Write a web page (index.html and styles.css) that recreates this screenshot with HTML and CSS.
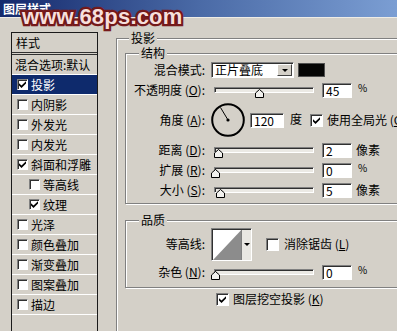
FILE: index.html
```html
<!DOCTYPE html>
<html lang="zh">
<head>
  <meta charset="UTF-8" />
  <title>图层样式</title>
  <link rel="stylesheet" href="styles.css">
</head>
<body>
  <div class="titlebar"><span class="title">图层样式</span></div>
  <div class="watermark">www.68ps.com</div>

  <div class="dialog">
    <div class="stylelist">
      <div class="list-head">样式</div>
      <div class="item plain">混合选项:默认</div>
      <div class="item selected"><span class="cb"><svg viewBox="0 0 7 7"><path d="M0 2.2 L2.5 4.6 L7 0.2 V2.6 L2.5 7 L0 4.6 Z"/></svg></span>投影</div>
      <div class="item"><span class="cb"></span>内阴影</div>
      <div class="item"><span class="cb"></span>外发光</div>
      <div class="item"><span class="cb"></span>内发光</div>
      <div class="item"><span class="cb"><svg viewBox="0 0 7 7"><path d="M0 2.2 L2.5 4.6 L7 0.2 V2.6 L2.5 7 L0 4.6 Z"/></svg></span>斜面和浮雕</div>
      <div class="item sub"><span class="cb"></span>等高线</div>
      <div class="item sub"><span class="cb"><svg viewBox="0 0 7 7"><path d="M0 2.2 L2.5 4.6 L7 0.2 V2.6 L2.5 7 L0 4.6 Z"/></svg></span>纹理</div>
      <div class="item"><span class="cb"></span>光泽</div>
      <div class="item"><span class="cb"></span>颜色叠加</div>
      <div class="item"><span class="cb"></span>渐变叠加</div>
      <div class="item"><span class="cb"></span>图案叠加</div>
      <div class="item"><span class="cb"></span>描边</div>
    </div>

    <fieldset class="group outer">
      <legend>投影</legend>

      <fieldset class="group inner">
        <legend>结构</legend>
        <div class="row">
          <span class="lbl">混合模式:</span>
          <div class="select">正片叠底<span class="drop"><i class="arrow"></i></span></div>
          <span class="swatch"></span>
        </div>
        <div class="row">
          <span class="lbl">不透明度 (<u>O</u>):</span>
          <div class="slider"><span class="thumb" style="left:45%"><svg viewBox="0 0 9 9"><polygon points="0.5,8.5 0.5,4 4.5,0.5 8.5,4 8.5,8.5"/></svg></span></div>
          <span class="num">45</span>
          <span class="unit pct">%</span>
        </div>
        <div class="row tall">
          <span class="lbl">角度 (<u>A</u>):</span>
          <svg class="dial" viewBox="0 0 34 34">
            <circle cx="17" cy="17" r="15.8"/>
            <line x1="17" y1="17" x2="9.5" y2="4.5"/>
            <circle class="dot" cx="17" cy="17" r="1.6"/>
          </svg>
          <span class="num wide">120</span>
          <span class="unit deg">度</span>
          <span class="cb big glob"><svg viewBox="0 0 7 7"><path d="M0 2.2 L2.5 4.6 L7 0.2 V2.6 L2.5 7 L0 4.6 Z"/></svg></span>
          <span class="cb-text">使用全局光 (<u>G</u>)</span>
        </div>
        <div class="row">
          <span class="lbl">距离 (<u>D</u>):</span>
          <div class="slider"><span class="thumb" style="left:3%"><svg viewBox="0 0 9 9"><polygon points="0.5,8.5 0.5,4 4.5,0.5 8.5,4 8.5,8.5"/></svg></span></div>
          <span class="num">2</span>
          <span class="unit">像素</span>
        </div>
        <div class="row">
          <span class="lbl">扩展 (<u>R</u>):</span>
          <div class="slider"><span class="thumb" style="left:0%"><svg viewBox="0 0 9 9"><polygon points="0.5,8.5 0.5,4 4.5,0.5 8.5,4 8.5,8.5"/></svg></span></div>
          <span class="num">0</span>
          <span class="unit pct">%</span>
        </div>
        <div class="row">
          <span class="lbl">大小 (<u>S</u>):</span>
          <div class="slider"><span class="thumb" style="left:5%"><svg viewBox="0 0 9 9"><polygon points="0.5,8.5 0.5,4 4.5,0.5 8.5,4 8.5,8.5"/></svg></span></div>
          <span class="num">5</span>
          <span class="unit">像素</span>
        </div>
      </fieldset>

      <fieldset class="group inner quality">
        <legend>品质</legend>
        <div class="row contour-row">
          <span class="lbl">等高线:</span>
          <div class="contour">
            <svg class="curve" viewBox="0 0 28 28" preserveAspectRatio="none">
              <rect width="28" height="28" fill="#fff"/>
              <polygon points="0,28 28,0 28,28" fill="#8c8c8c"/>
            </svg>
            <span class="cdrop"><i class="arrow"></i></span>
          </div>
          <span class="cb big aa"></span>
          <span class="cb-text">消除锯齿 (<u>L</u>)</span>
        </div>
        <div class="row noise">
          <span class="lbl">杂色 (<u>N</u>):</span>
          <div class="slider"><span class="thumb" style="left:0%"><svg viewBox="0 0 9 9"><polygon points="0.5,8.5 0.5,4 4.5,0.5 8.5,4 8.5,8.5"/></svg></span></div>
          <span class="num">0</span>
          <span class="unit pct">%</span>
        </div>
      </fieldset>

      <div class="row knockout">
        <span class="cb big"><svg viewBox="0 0 7 7"><path d="M0 2.2 L2.5 4.6 L7 0.2 V2.6 L2.5 7 L0 4.6 Z"/></svg></span>
        <span class="cb-text">图层挖空投影 (<u>K</u>)</span>
      </div>
    </fieldset>
  </div>
</body>
</html>
```

FILE: styles.css
```css
* {
  margin: 0;
  padding: 0;
  box-sizing: border-box;
}
body {
  position: relative;
  width: 397px;
  height: 331px;
  overflow: hidden;
  background: #d4d0c8;
  color: #000;
  font-family: "Noto Sans CJK SC", "Liberation Sans", sans-serif;
  font-size: 12px;
  line-height: 14px;
}
u {
  text-decoration: underline;
  text-underline-offset: 1px;
}

/* title bar */
.titlebar {
  height: 18px;
  padding: 1px 0 0 3px;
  background: linear-gradient(to right, #14296c, #4a6aa6 50%, #7b9ed3);
  border-bottom: 1px solid #eeece6;
}
.title {
  color: #fff;
  font-weight: bold;
  line-height: 15px;
}
.watermark {
  position: absolute;
  left: 22px;
  top: 4px;
  font-family: "Liberation Sans", sans-serif;
  font-weight: bold;
  font-size: 22px;
  line-height: 25px;
  letter-spacing: 0.2px;
  color: #f7dfdc;
  -webkit-text-stroke: 4.5px #7a1c1e;
  paint-order: stroke fill;
  text-shadow: 0 0 3px #5a1010;
}

.dialog {
  display: flex;
  align-items: flex-start;
  padding: 13px 0 0 11px;
}

/* style list */
.stylelist {
  flex-shrink: 0;
  width: 87px;
  height: 301px;
  margin-top: 1px;
  border: 1px solid #1a1a1a;
  border-bottom: none;
}
.list-head {
  height: 22px;
  padding: 3px 0 0 4px;
  border-bottom: 3px double #303030;
}
.item {
  display: flex;
  align-items: center;
  height: 20px;
  padding-left: 5px;
  border-bottom: 1px solid #fff;
  white-space: nowrap;
}
.item.plain {
  padding-left: 3px;
}
.item.sub {
  padding-left: 17px;
}
.item.selected {
  background: #0e2a6c;
  color: #fff;
}
.item .cb {
  width: 11px;
  height: 11px;
  margin-right: 3px;
}

/* checkboxes */
.cb {
  display: inline-flex;
  align-items: center;
  justify-content: center;
  flex-shrink: 0;
  background: #fff;
  border: 1px solid;
  border-color: #808080 #fff #fff #808080;
  box-shadow: inset 1px 1px 0 #303030;
}
.cb svg {
  width: 7px;
  height: 7px;
  fill: #000;
}
.cb.big {
  width: 13px;
  height: 13px;
}
.cb-text {
  margin-left: 4px;
  white-space: nowrap;
}

/* group boxes */
.group {
  border: 1px solid #808080;
  box-shadow: inset 1px 1px 0 #fff, 1px 1px 0 #fff;
}
.group legend {
  padding: 0 2px;
  background: #d4d0c8;
  line-height: 14px;
}
.outer {
  flex-shrink: 0;
  width: 300px;
  height: 304px;
  margin-left: 18px;
  padding: 0 8px;
}
.outer > legend {
  margin-left: 4px;
}
.inner {
  margin-top: 1px;
  padding: 0 0 3px 0;
}
.inner > legend {
  margin-left: 13px;
}
.quality {
  margin-top: 9px;
  padding-bottom: 5px;
}

/* rows */
.row {
  display: flex;
  align-items: center;
  height: 20px;
  white-space: nowrap;
}
.row.tall {
  height: 40px;
}
.lbl {
  flex-shrink: 0;
  width: 79px;
  margin-right: 6px;
  text-align: right;
}

.select {
  display: flex;
  align-items: center;
  width: 83px;
  height: 16px;
  padding-left: 3px;
  background: #fff;
  border: 1px solid;
  border-color: #808080 #fff #fff #808080;
  box-shadow: inset 1px 1px 0 #303030;
}
.drop {
  display: flex;
  align-items: center;
  justify-content: center;
  width: 15px;
  height: 12px;
  margin-left: auto;
  margin-right: 1px;
  background: #d4d0c8;
  border: 1px solid;
  border-color: #fff #404040 #404040 #fff;
}
.arrow {
  display: block;
  width: 0;
  height: 0;
  border-top: 3px solid #000;
  border-left: 3px solid transparent;
  border-right: 3px solid transparent;
}
.swatch {
  width: 27px;
  height: 14px;
  margin-left: 4px;
  background: #050505;
  border: 1px solid #505050;
}

.slider {
  position: relative;
  flex-shrink: 0;
  width: 100px;
  height: 6px;
  margin-left: 3px;
  background: #ebe9e4;
  border: 1px solid;
  border-color: #808080 #fff #fff #808080;
  box-shadow: inset 1px 1px 0 #303030;
}
.thumb {
  position: absolute;
  top: 1px;
  width: 9px;
  height: 9px;
  margin-left: -4px;
}
.thumb svg {
  display: block;
  width: 9px;
  height: 9px;
  fill: #f2f1ee;
  stroke: #000;
  stroke-width: 1;
}

.num {
  flex-shrink: 0;
  width: 30px;
  height: 15px;
  margin-left: 8px;
  padding-left: 3px;
  background: #fff;
  border: 1px solid;
  border-color: #808080 #fff #fff #808080;
  box-shadow: inset 1px 1px 0 #303030;
  line-height: 13px;
}
.num.wide {
  width: 34px;
  margin-left: 5px;
}
.unit {
  margin-left: 4px;
}
.unit.pct {
  margin-left: 6px;
  margin-top: -4px;
  font-size: 10px;
}
.unit.deg {
  margin-left: 6px;
  margin-top: -3px;
}
.glob {
  margin-left: 8px;
}

.dial {
  flex-shrink: 0;
  width: 34px;
  height: 34px;
}
.dial circle {
  fill: none;
  stroke: #000;
  stroke-width: 2;
}
.dial line {
  stroke: #000;
  stroke-width: 1;
}
.dial .dot {
  fill: #000;
  stroke: none;
}

.contour-row {
  height: 34px;
}
.contour {
  display: flex;
  width: 41px;
  height: 33px;
  border: 1px solid;
  border-color: #808080 #fff #fff #808080;
  box-shadow: inset 1px 1px 0 #303030;
  padding: 1px 0 0 1px;
}
.curve {
  display: block;
  width: 29px;
  height: 30px;
}
.cdrop {
  display: flex;
  align-items: center;
  justify-content: center;
  width: 10px;
  background: #e9e7e2;
  border-left: 1px solid #808080;
}
.aa {
  margin-left: 14px;
}
.aa + .cb-text {
  margin-left: 5px;
}
.noise {
  margin-top: 1px;
}
.knockout {
  margin-top: 1px;
  padding-left: 91px;
}
```
